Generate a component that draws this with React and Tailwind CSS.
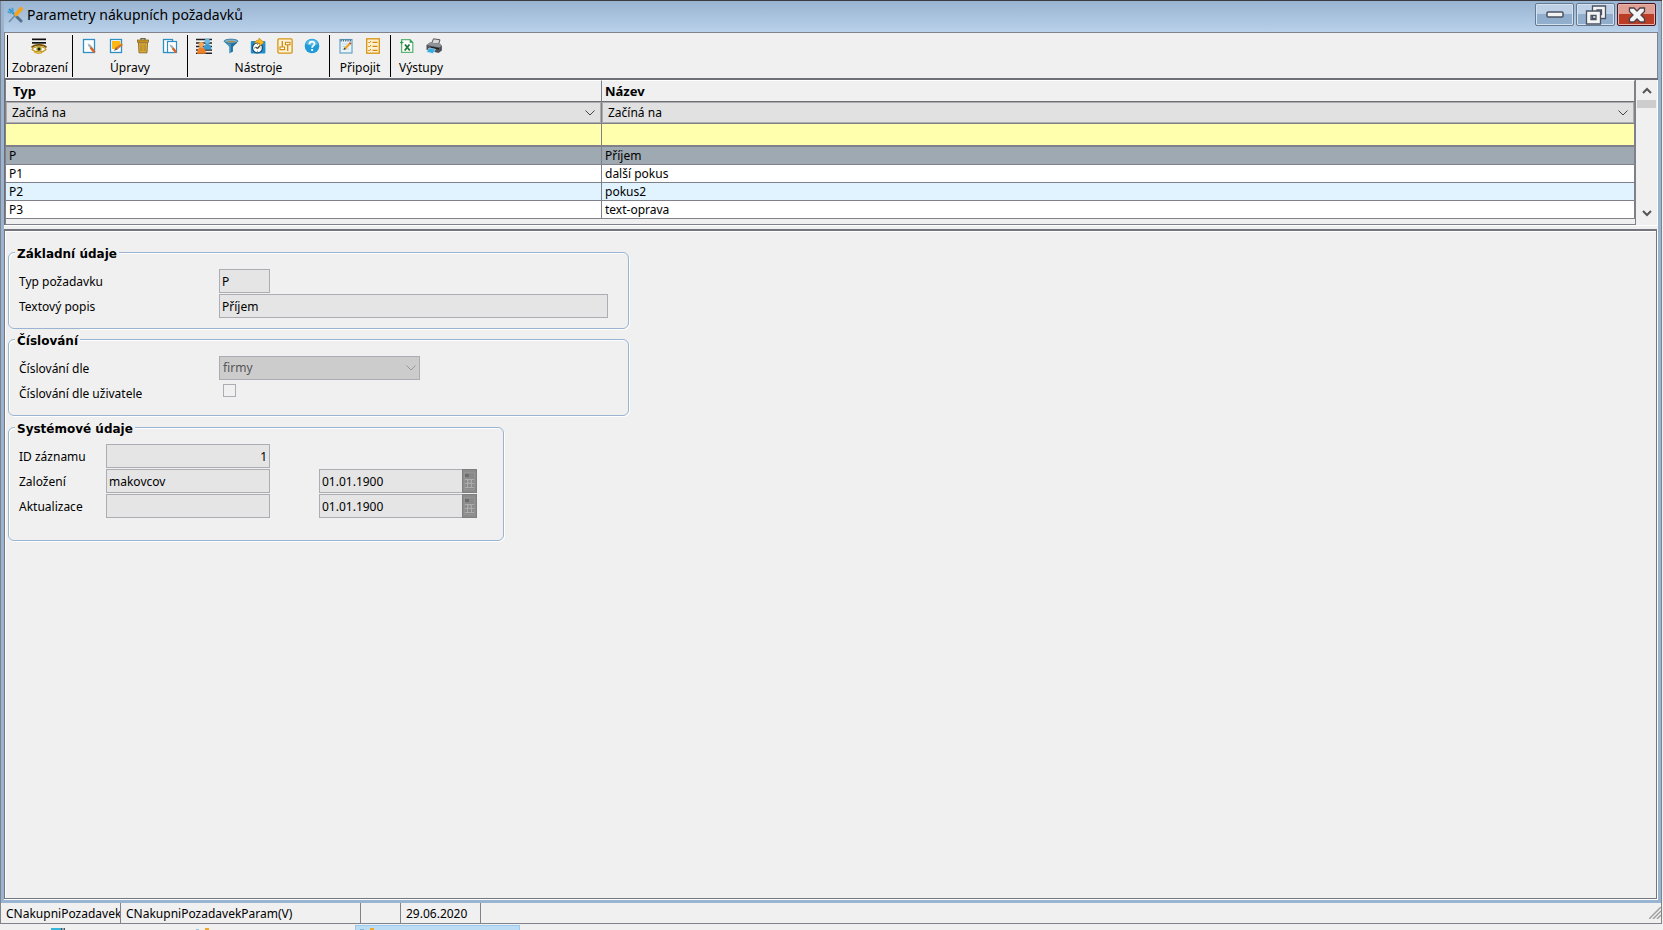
import { useState } from "react";

const RECORDS = [
  { typ: "P", nazev: "Příjem" },
  { typ: "P1", nazev: "další pokus" },
  { typ: "P2", nazev: "pokus2" },
  { typ: "P3", nazev: "text-oprava" },
];

const Svg = ({ children }) => (
  <svg viewBox="0 0 16 16" className="block size-4" aria-hidden="true">
    {children}
  </svg>
);

const Page = ({ x = 2.5, w = 11 }) => (
  <rect x={x} y="1.5" width={w} height="13" fill="#fff" stroke="#2f8fc4" strokeWidth="1.3" />
);

const AppIcon = () => (
  <Svg>
    <path d="M2 2l9 9" stroke="#2f95cf" strokeWidth="2" />
    <path d="M10 10l4 4" stroke="#54718a" strokeWidth="3" strokeLinecap="round" />
    <path d="M0.8 4.2a3 3 0 0 0 4.4 1M4.6 1a3 3 0 0 1 1 3.8" stroke="#4a9fd0" strokeWidth="1.6" fill="none" />
    <path d="M14 2L9 7.5" stroke="#f5a31c" strokeWidth="4" strokeLinecap="round" />
    <path d="M8 8.5L2 15" stroke="#6f8ca5" strokeWidth="1.5" />
  </Svg>
);

const EyeIcon = () => (
  <Svg>
    <rect x="1" y="0.5" width="14" height="1.7" fill="#111" />
    <rect x="1" y="4" width="14" height="1.7" fill="#111" />
    <path d="M0.5 9.5C3 6.5 12 5.5 15.5 9.5" fill="none" stroke="#7a5200" strokeWidth="1.6" />
    <path d="M1 11.5C4 7.5 12 7.5 15 11.5 12 14.5 5 15 1 11.5z" fill="#fff" stroke="#c69214" strokeWidth="1.2" />
    <circle cx="8" cy="11" r="2.8" fill="#b9b042" />
    <circle cx="8" cy="11" r="1.5" fill="#1b1b10" />
    <path d="M3 13.8c3 2 7 2 9-.2" fill="none" stroke="#d9a520" strokeWidth="1.2" />
  </Svg>
);

const NewIcon = () => (
  <Svg>
    <Page />
    <path d="M6.5 5.5l3 1.2 3.8 5-1.8 1.5-4-5z" fill="#9fb2bb" />
    <path d="M9.500 9.500l4.200 5" stroke="#e2601d" strokeWidth="2.2" />
  </Svg>
);

const EditIcon = () => (
  <Svg>
    <Page />
    <path d="M4 3h8.500v5L9 11H4z" fill="#fdb813" />
    <path d="M6 12.800l2-3.500 5.500-4L15 7l-5.500 4.500z" fill="#d9772b" />
    <path d="M6 12.800l2-3.300 1.500 2z" fill="#6d6d6d" />
  </Svg>
);

const TrashIcon = () => (
  <Svg>
    <path d="M6 2V.7h4V2" fill="none" stroke="#6d6544" strokeWidth="1.3" />
    <rect x="2.5" y="2" width="11" height="2.2" fill="#d99a16" stroke="#7c6a34" strokeWidth="0.8" />
    <path d="M3.5 4.800h9l-.5 10H4z" fill="#eeb02a" stroke="#86713a" strokeWidth="1" />
    <path d="M6 6.300v7M10 6.300v7" stroke="#8d7a3c" strokeWidth="1" />
    <path d="M8 6.300v7" stroke="#a68a3a" strokeWidth="1" />
  </Svg>
);

const CopyIcon = () => (
  <Svg>
    <Page x={1.5} w={9} />
    <rect x="5.5" y="3.5" width="9" height="11" fill="#fff" stroke="#2f8fc4" strokeWidth="1.2" />
    <path d="M7.5 6.500l2.700 1 4 4.800-1.700 1.300-4-4.600z" fill="#9fb2bb" />
    <path d="M10.600 10.300l3.600 4.200" stroke="#e2601d" strokeWidth="2.1" />
  </Svg>
);

const UsersIcon = () => (
  <Svg>
    <path d="M0 1.500h16M0 5h16M0 8.500h16M0 12h16M0 15.200h16" stroke="#222" strokeWidth="1.500" />
    <circle cx="11.300" cy="3.200" r="2.700" fill="#6dbbe3" />
    <path d="M7.500 11.500c0-4 1.500-5.500 3.800-5.500s4 1.500 4 5.500z" fill="#3d9bd0" />
    <circle cx="5.200" cy="6.600" r="2.700" fill="#f5a75c" />
    <path d="M1 15.700c0-4.500 1.600-6.200 4.200-6.200s4.600 1.700 4.600 6.200z" fill="#ee7f26" />
  </Svg>
);

const FunnelIcon = () => (
  <Svg>
    <path d="M1.200 3.500C3 6 6 7.500 6.200 9.500V15.500l3.600-2V9.500C10 7.500 13 6 14.800 3.500z" fill="#3f95c6" />
    <path d="M8 5h6C12 7 9.800 8 9.800 9.500v4L8 14.500z" fill="#256f9c" />
    <ellipse cx="8" cy="3.200" rx="6.900" ry="2" fill="#74bce2" stroke="#2b6f98" strokeWidth="0.900" />
    <ellipse cx="8" cy="3.600" rx="4.500" ry="0.900" fill="#b08a4a" />
  </Svg>
);

const ClockIcon = () => (
  <Svg>
    <rect x="0.800" y="3" width="14.600" height="12.500" rx="1" fill="#1f8fcd" />
    <circle cx="7.500" cy="9.800" r="5" fill="#fff" stroke="#0f4f78" strokeWidth="1.200" />
    <path d="M7.500 10.500l3-3.500M7.500 10.500L5.500 9" fill="none" stroke="#333" strokeWidth="1.200" />
    <path d="M7.500 6v1M7.500 12.800v1M4 10h1M10.500 10h1" stroke="#777" strokeWidth="0.900" />
    <path d="M4.500 5.500C5 2.800 7 1.800 9 2V0l5 4.500-4.500 3.700V5.500C7.500 4.500 6 4.500 4.500 5.500z" fill="#fbb51c" stroke="#b97808" strokeWidth="0.500" />
  </Svg>
);

const SlidersIcon = () => (
  <Svg>
    <rect x="0.900" y="0.900" width="14.200" height="14.200" rx="1" fill="#fdf3da" stroke="#d69312" strokeWidth="1.300" />
    <path d="M5.300 3v9M10.700 4v9" stroke="#d08a0c" strokeWidth="1.300" />
    <path d="M3 9h4.600v2.600H3zM8.400 4.200H13v2.600H8.400z" fill="#fff" stroke="#d08a0c" strokeWidth="1.100" />
  </Svg>
);

const HelpIcon = () => (
  <Svg>
    <circle cx="8" cy="8" r="7.300" fill="#219bd8" />
    <path d="M2 6a6.300 6.300 0 0 1 12 0C10 8 6 8 2 6z" fill="#58b9e6" />
    <path d="M5.500 6.200C5.500 2.800 10.700 3 10.500 6c-.1 1.700-2.400 1.700-2.400 3.800" fill="none" stroke="#fff" strokeWidth="1.800" />
    <rect x="7.200" y="11" width="1.900" height="1.900" fill="#fff" />
  </Svg>
);

const NoteIcon = () => (
  <Svg>
    <rect x="2" y="1.500" width="12" height="13.500" fill="#e9f3f9" stroke="#5b9cc2" strokeWidth="1.100" />
    <path d="M2.500 2.500h11" stroke="#4a6d84" strokeWidth="1.800" strokeDasharray="1.300 1" />
    <path d="M4 6h7M4 8.500h6M4 11h7" stroke="#b7d3e3" strokeWidth="0.900" />
    <path d="M5.500 12l1-2.500L11.500 4.500l1.500 1.500L8 11z" fill="#f0a422" />
    <path d="M5.500 12l1-2.500L8 11z" fill="#444" />
    <path d="M11.500 4.500l1.500 1.500" stroke="#c43c2a" strokeWidth="1.200" />
  </Svg>
);

const ChecklistIcon = () => (
  <Svg>
    <rect x="1.700" y="0.800" width="12.600" height="14.400" fill="#fdf0d0" stroke="#d69312" strokeWidth="1.300" />
    <path d="M3.300 4l1 1 1.700-2M3.300 8l1 1L6 7M3.300 12l1 1L6 11" fill="none" stroke="#d08a0c" strokeWidth="1" />
    <path d="M7.500 4.300h5M7.500 8.300h5M7.500 12.300h5" stroke="#d08a0c" strokeWidth="1.300" />
  </Svg>
);

const ExcelIcon = () => (
  <Svg>
    <path d="M2.600 1.600h8.400l2.800 2.800v10H2.600z" fill="#fff" stroke="#5fb478" strokeWidth="1.300" />
    <path d="M10.700 1.200l3.600 3.600h-3.600z" fill="#2f9e4f" />
    <path d="M6 6.500l4.800 6M10.500 6.500l-4.800 6" stroke="#1a7a36" strokeWidth="1.800" />
    <path d="M1 4.500h3.500M2.700 2.800v3.500" stroke="#2f9e4f" strokeWidth="1" />
  </Svg>
);

const PrinterIcon = () => (
  <Svg>
    <path d="M5.500 5.500L7.500.8l6.500 1-1.500 4.700z" fill="#d8d8d8" stroke="#555" strokeWidth="1" />
    <path d="M0.500 7l3.500-2.500 10 1.300 1.900 2V12.500l-3.400 2.500L0.500 12z" fill="#4e5257" />
    <path d="M0.500 7l3.500-2.500 10 1.300 1.900 2-2.900 1.700z" fill="#8f9499" />
    <path d="M5 9.500l8 1.300" stroke="#1d1f22" strokeWidth="1.500" />
    <path d="M3 10l6.500 1.200-2.500 4.300L.6 14z" fill="#36ace0" stroke="#d9eef8" strokeWidth="0.600" />
  </Svg>
);

const CalendarIcon = () => (
  <svg viewBox="0 0 11 18" className="block h-[18px] w-[11px] shrink-0" aria-hidden="true">
    <rect x="0" y="0" width="11" height="18" fill="#949494" />
    <rect x="1" y="1" width="9" height="16" fill="#8a8a8a" />
    <rect x="1" y="2" width="4" height="3" fill="#6c6c6c" />
    <path d="M1 7.500h9M1 11.500h9M1 15.500h9M3.500 7v9M7.500 7v9" stroke="#adadad" />
    <rect x="4.500" y="8.500" width="2" height="2" fill="#777" stroke="#999" />
  </svg>
);

const Chevron = ({ className }) => (
  <svg viewBox="0 0 10 6" className={`pointer-events-none absolute h-1.5 w-2.5 ${className}`} fill="none" stroke="currentColor" aria-hidden="true">
    <path d="M0.500 0.500L5 5 9.500 0.500" />
  </svg>
);

const TOOLS = [
  { label: "Zobrazení", width: "w-[65px]", items: [["Zobrazit", EyeIcon]] },
  {
    label: "Úpravy",
    width: "w-[115px]",
    items: [["Nový", NewIcon], ["Upravit", EditIcon], ["Smazat", TrashIcon], ["Kopírovat", CopyIcon]],
  },
  {
    label: "Nástroje",
    width: "w-[142px]",
    items: [["Uživatelé", UsersIcon], ["Filtr", FunnelIcon], ["Historie", ClockIcon], ["Nastavení", SlidersIcon], ["Nápověda", HelpIcon]],
  },
  { label: "Připojit", width: "w-[61px]", items: [["Poznámka", NoteIcon], ["Seznam", ChecklistIcon]] },
  { label: "Výstupy", width: "w-[61px]", items: [["Excel", ExcelIcon], ["Tisk", PrinterIcon]] },
];

function TitleBar() {
  return (
    <header className="flex h-[31px] items-start justify-between bg-linear-to-b from-[#99b4d1] to-[#b9d1ea] pr-0.5 pl-[3px]">
      <div className="flex h-7 items-center gap-1">
        <AppIcon />
        <h1 className="text-sm leading-7">Parametry nákupních požadavků</h1>
      </div>
      <div className="flex gap-0.5 pt-0.5">
        <button aria-label="Minimalizovat" className="flex h-[23px] w-[39px] items-center justify-center rounded-xs border border-[#66798f] bg-linear-to-b from-[#bdd0e5] from-45% to-[#92aecd] to-50% inset-shadow-[0_0_0_1px_#d4e2f1]">
          <svg viewBox="0 0 18 7" className="h-[7px] w-[18px]"><rect x="1" y="1" width="16" height="5" rx="1" fill="#f4f4f4" stroke="#4b5361" strokeWidth="1.500" /></svg>
        </button>
        <button aria-label="Obnovit" className="flex h-[23px] w-[39px] items-center justify-center rounded-xs border border-[#66798f] bg-linear-to-b from-[#bdd0e5] from-45% to-[#92aecd] to-50% inset-shadow-[0_0_0_1px_#d4e2f1]">
          <svg viewBox="0 0 22 20" className="h-5 w-[22px]" fill="#f4f4f4" stroke="#4b5361" strokeWidth="1.300" fillRule="evenodd">
            <path d="M7.500 1h13v12.500h-13zM12 5v4.500h4.500V5z" />
            <path d="M1.500 6h14v13h-14zM6 10.500v4h5v-4z" />
          </svg>
        </button>
        <button aria-label="Zavřít" className="flex h-[23px] w-[39px] items-center justify-center rounded-xs border border-[#4a1420] bg-linear-to-b from-[#dfa093] from-45% to-[#bb3d26] to-50% inset-shadow-[0_0_0_1px_#e6b3a9]">
          <svg viewBox="0 0 18 16" className="h-4 w-[18px]">
            <path d="M1.500 1h4.500l3 3L12 1h4.500v3.500L13 8l3.500 3.500V15H12l-3-3-3 3H1.500v-3.500L5 8 1.500 4.500z" fill="#f4f4f4" stroke="#4b3f4b" strokeWidth="1.300" />
          </svg>
        </button>
      </div>
    </header>
  );
}

function Toolbar() {
  return (
    <nav className="flex h-[46px] border-t border-r border-l border-[#80838c] bg-[#f0f0f0] px-0.5 pt-0.5 pb-px">
      {TOOLS.map((g) => (
        <div key={g.label} className={`flex flex-col items-center gap-1 border-l border-black pt-[3px] ${g.width}`}>
          <div className="flex gap-[11px] pr-0.5">
            {g.items.map(([name, Icon]) => (
              <button key={name} aria-label={name}>
                <Icon />
              </button>
            ))}
          </div>
          <span className="leading-5">{g.label}</span>
        </div>
      ))}
    </nav>
  );
}

function FilterCell({ label }) {
  return (
    <td className="border-r border-b border-[#80808a] p-0">
      <div className="relative">
        <select aria-label={label} className="block h-[21px] w-full appearance-none border border-[#adadad] bg-[#e1e1e1] px-[5px]">
          <option>Začíná na</option>
        </select>
        <Chevron className="top-2 right-1.5 text-[#444]" />
      </div>
    </td>
  );
}

function Grid({ selected, onSelect }) {
  return (
    <section className="flex border-t-2 border-l border-[#6f6f77] bg-[#f0f0f0]">
      <div className="min-w-0 flex-1 border-r border-b border-l border-[#80808a] pb-[5px]">
        <table className="w-full table-fixed border-separate border-spacing-0 text-left">
          <colgroup>
            <col className="w-[596px]" />
            <col />
          </colgroup>
          <thead>
            <tr className="h-[21px] text-[13px] leading-4">
              <th className="border-t border-r border-b border-t-white border-r-[#80808a] border-b-[#6f6f77] px-[7px] py-0.5 font-bold">Typ</th>
              <th className="border-t border-r border-b border-t-white border-r-[#80808a] border-b-[#6f6f77] px-[3px] py-0.5 font-bold">Název</th>
            </tr>
          </thead>
          <tbody>
            <tr>
              <FilterCell label="Typ – podmínka" />
              <FilterCell label="Název – podmínka" />
            </tr>
            <tr>
              <td className="border-r border-b-2 border-[#80808a] p-0">
                <input aria-label="Typ – hledat" className="block h-[21px] w-full bg-[#ffffae] px-1 outline-none" />
              </td>
              <td className="border-r border-b-2 border-[#80808a] p-0">
                <input aria-label="Název – hledat" className="block h-[21px] w-full bg-[#ffffae] px-1 outline-none" />
              </td>
            </tr>
            {RECORDS.map((r, i) => (
              <tr
                key={r.typ}
                onClick={() => onSelect(i)}
                className={i === selected ? "bg-[#9ea9b1]" : i % 2 ? "bg-white" : "bg-[#e1f3ff]"}
              >
                <td className="border-r border-b border-[#80808a] px-[3px] py-0 leading-[17px]">{r.typ}</td>
                <td className="border-r border-b border-[#80808a] px-[3px] py-0 leading-[17px]">{r.nazev}</td>
              </tr>
            ))}
          </tbody>
        </table>
      </div>
      <div className="flex w-[22px] flex-col items-center border-r border-white px-px pb-0.5 text-[#555]">
        <button aria-label="Nahoru" className="flex h-5 w-full items-center justify-center">
          <svg viewBox="0 0 10 7" className="h-[7px] w-2.5" fill="none" stroke="currentColor" strokeWidth="2"><path d="M1 6l4-4 4 4" /></svg>
        </button>
        <div className="h-2 w-[19px] bg-[#cdcdcd]" />
        <div className="flex-1" />
        <button aria-label="Dolů" className="flex h-5 w-full items-center justify-center">
          <svg viewBox="0 0 10 7" className="h-[7px] w-2.5" fill="none" stroke="currentColor" strokeWidth="2"><path d="M1 1l4 4 4-4" /></svg>
        </button>
      </div>
    </section>
  );
}

function Group({ title, className, children }) {
  return (
    <fieldset className={`rounded-md border border-[#9ab4d1] pt-[7px] pl-2.5 shadow-[1px_1px_0_#fff] inset-shadow-[1px_1px_0_#fff] ${className}`}>
      <legend className="-ml-1 bg-[#f0f0f0] px-0.5 pt-1 font-['DejaVu_Sans',sans-serif] leading-4 font-bold">{title}</legend>
      <div className="flex flex-col gap-px">{children}</div>
    </fieldset>
  );
}

function Row({ label, id, wide, children }) {
  return (
    <div className="flex h-6">
      <label htmlFor={id} className={`leading-[26px] ${wide ? "w-[200px]" : "w-[87px]"}`}>
        {label}
      </label>
      {children}
    </div>
  );
}

const Field = ({ className = "", ...props }) => (
  <input readOnly className={`h-6 border border-[#abadb3] bg-[#e5e5e5] px-0.5 outline-none ${className}`} {...props} />
);

const DateField = ({ label, value }) => (
  <div className="ml-[49px] flex">
    <Field aria-label={label} value={value} className="w-[143px] border-r-0" />
    <button aria-label={`${label} – kalendář`} className="flex h-6 w-[15px] items-center justify-center border border-[#7e7e7e] bg-[#8c8c8c]">
      <CalendarIcon />
    </button>
  </div>
);

function Detail({ record }) {
  return (
    <div className="flex flex-1 bg-white pr-px pb-px">
      <main className="flex-1 border-t-2 border-r border-b border-l border-[#75757d] bg-[#f0f0f0] pt-[11px] pl-[3px] inset-shadow-[1px_1px_0_#fff]">
        <Group title="Základní údaje" className="w-[621px] pb-2.5">
          <Row label="Typ požadavku" id="typ" wide>
            <Field id="typ" value={record.typ} className="w-[51px]" />
          </Row>
          <Row label="Textový popis" id="popis" wide>
            <Field id="popis" value={record.nazev} className="w-[389px]" />
          </Row>
        </Group>
        <Group title="Číslování" className="w-[621px] pb-2.5">
          <Row label="Číslování dle" id="cislovani" wide>
            <div className="relative">
              <select id="cislovani" disabled className="block h-6 w-[201px] appearance-none border border-[#abadb3] bg-[#cccccc] px-[3px] text-[#555] opacity-100">
                <option>firmy</option>
              </select>
              <Chevron className="top-[9px] right-1 text-[#999]" />
            </div>
          </Row>
          <Row label="Číslování dle uživatele" id="uzivatel" wide>
            <input id="uzivatel" type="checkbox" disabled className="mt-[3px] ml-1 size-[13px] appearance-none border border-[#abadb3] bg-[#f0f0f0]" />
          </Row>
        </Group>
        <Group title="Systémové údaje" className="mt-px w-[496px] pb-[22px]">
          <Row label="ID záznamu" id="zaznam">
            <Field id="zaznam" value="1" className="w-[164px] text-right" />
          </Row>
          <Row label="Založení" id="zalozil">
            <Field id="zalozil" value="makovcov" className="w-[164px]" />
            <DateField label="Datum založení" value="01.01.1900" />
          </Row>
          <Row label="Aktualizace" id="aktualizoval">
            <Field id="aktualizoval" value="" className="w-[164px]" />
            <DateField label="Datum aktualizace" value="01.01.1900" />
          </Row>
        </Group>
      </main>
    </div>
  );
}

function StatusBar() {
  return (
    <footer className="flex h-[21px] items-stretch border-r border-b border-l border-[#80838c] bg-[#f0f0f0] leading-[22px] whitespace-nowrap">
      <span className="w-[120px] overflow-hidden border-r border-[#80838c] pl-[5px]">CNakupniPozadavekP</span>
      <span className="w-60 border-r border-[#80838c] pl-[5px]">CNakupniPozadavekParam(V)</span>
      <span className="w-10 border-r border-[#80838c]" />
      <span className="w-20 border-r border-[#80838c] pl-[5px]">29.06.2020</span>
      <span className="ml-auto flex items-end pb-1">
        <svg viewBox="0 0 12 12" className="size-3" stroke="#a0a0a0" strokeWidth="1.500"><path d="M0 12L12 0M4 12l8-8M8 12l4-4" /></svg>
      </span>
    </footer>
  );
}

// top edge of the system taskbar under the window
function Taskbar() {
  return (
    <div className="flex h-1.5 items-end bg-[#f0f0f0]">
      <svg viewBox="0 0 14 2" className="ml-[51px] h-0.5 w-3.5"><path d="M0 1h10" stroke="#35b6dc" strokeWidth="2" /><path d="M10 1h4" stroke="#456" strokeWidth="2" strokeDasharray="1.500 1" /></svg>
      <svg viewBox="0 0 14 2" className="ml-[131px] h-0.5 w-3.5"><path d="M0 1.500h3" stroke="#9cc3dc" /><path d="M9 1h4" stroke="#f0a82a" strokeWidth="2" /></svg>
      <div className="ml-[145px] flex h-[5px] w-[165px] items-end border-t border-r border-l border-[#99c9ef] bg-[#bcdcf4]">
        <svg viewBox="0 0 14 2" className="ml-1 h-0.5 w-3.5"><path d="M0 1.500h4" stroke="#8ab5d0" /><path d="M10 1h4" stroke="#f0a82a" strokeWidth="2" /></svg>
      </div>
    </div>
  );
}

export default function App() {
  const [selected, setSelected] = useState(0);

  return (
    <div className="flex min-h-screen flex-col bg-[#f0f0f0] font-['Noto_Sans',sans-serif] text-xs text-black">
      <div className="mr-px flex flex-1 flex-col border-t border-[#3c3c40]">
        <div className="flex flex-1 flex-col border-r border-l border-[#80838c] bg-[#99b4d1] px-[3px] pb-[3px]">
          <TitleBar />
          <Toolbar />
          <Grid selected={selected} onSelect={setSelected} />
          <div className="h-1 border-t border-white bg-[#f0f0f0]" />
          <Detail record={RECORDS[selected]} />
        </div>
        <StatusBar />
      </div>
      <Taskbar />
    </div>
  );
}
